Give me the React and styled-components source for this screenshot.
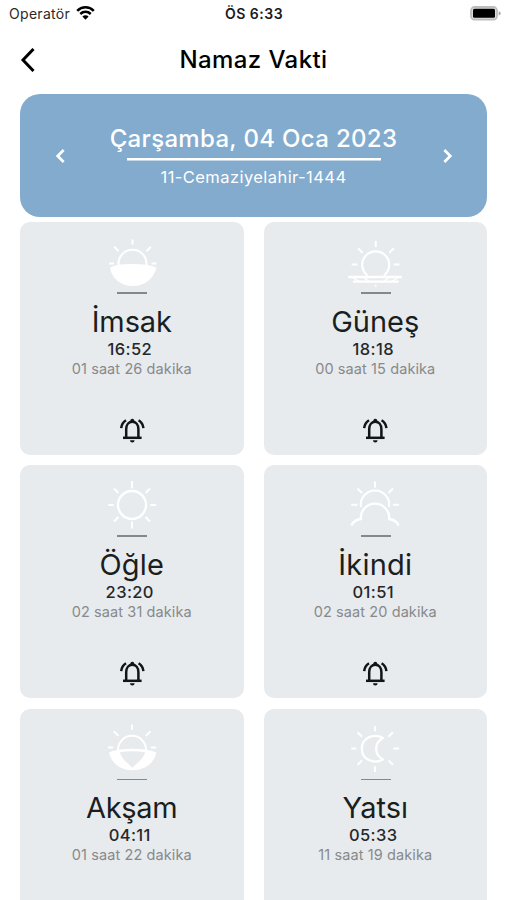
import React from "react";
import styled, { createGlobalStyle } from "styled-components";

const GlobalStyle = createGlobalStyle`
  * { box-sizing: border-box; }
  html, body { margin: 0; padding: 0; background: #fff; }
  body { font-family: Inter, "Liberation Sans", sans-serif; color: #1b1e20; overflow: hidden; }
`;

const Screen = styled.main`
  width: 507px;
  height: 900px;
  overflow: hidden;
  display: flex;
  flex-direction: column;
  background: #fff;
`;

const StatusBar = styled.header`
  height: 28px;
  flex: none;
  display: grid;
  grid-template-columns: 1fr auto 1fr;
  align-items: center;
  padding: 0 6px 1px 9px;
`;

const Carrier = styled.div`
  display: flex;
  align-items: center;
  gap: 6px;
  font-size: 14px;
  line-height: 20px;
  letter-spacing: 0.3px;
  color: #2a2a2a;
  svg { display: block; margin-top: -2px; }
`;

const Clock = styled.div`
  font-size: 14px;
  line-height: 20px;
  font-weight: 600;
  letter-spacing: 0.5px;
  margin-right: 2px;
  color: #1a1a1a;
`;

const Battery = styled.div`
  justify-self: end;
  svg { display: block; }
`;

const NavBar = styled.nav`
  height: 66px;
  flex: none;
  display: grid;
  grid-template-columns: 60px 1fr 60px;
  align-items: center;
`;

const IconButton = styled.button`
  border: 0;
  padding: 0;
  background: none;
  display: flex;
  justify-content: center;
  color: inherit;
  svg { display: block; }
`;

const BackButton = styled(IconButton)`
  justify-content: flex-start;
  padding: 0 0 2px 20px;
  color: #000;
`;

const Title = styled.h1`
  margin: 0;
  text-align: center;
  font-size: 24px;
  line-height: 32px;
  font-weight: 500;
  letter-spacing: 0.4px;
  color: #000;
  padding-bottom: 2px;
`;

const DateBanner = styled.section`
  height: 123px;
  flex: none;
  margin: 0 20px;
  border-radius: 20px;
  background: #82abce;
  color: #fff;
  display: grid;
  grid-template-columns: 80px 1fr 80px;
  align-items: center;
`;

const NextButton = styled(IconButton)`
  padding-left: 2px;
`;

const DateText = styled.div`
  display: flex;
  flex-direction: column;
  align-items: center;
  white-space: nowrap;
`;

const Gregorian = styled.div`
  font-size: 24px;
  line-height: 30px;
  font-weight: 500;
  letter-spacing: 0.33px;
  padding-top: 1px;
`;

const DateRule = styled.div`
  width: 254px;
  height: 3px;
  margin: 4px 0 5px;
  background: linear-gradient(#fff 0 2px, rgba(255, 255, 255, 0.55) 2px);
`;

const Hijri = styled.div`
  font-size: 16.5px;
  line-height: 22px;
  letter-spacing: 0.43px;
`;

const Grid = styled.section`
  display: grid;
  grid-template-columns: 1fr 1fr;
  grid-auto-rows: 233px;
  gap: 10.2px 20px;
  padding: 5.3px 20px 0;
`;

const Card = styled.article`
  border-radius: 10px;
  background: #e7ebee;
  padding-top: 13px;
  display: flex;
  flex-direction: column;
  align-items: center;
`;

const Picture = styled.svg`
  width: 60px;
  height: 57px;
  flex: none;
  display: block;
  fill: none;
  stroke: #fff;
  stroke-width: 2;
  stroke-linecap: butt;
`;

const CardRule = styled.div`
  width: 30px;
  height: 1.4px;
  margin-left: 1px;
  background: #85888a;
`;

const Name = styled.h2`
  margin: 13px 0 0;
  font-size: 29px;
  line-height: 30px;
  font-weight: 400;
  letter-spacing: ${(p) => p.$tracking || 0}px;
`;

const Time = styled.div`
  margin: 2.3px 4px 0 0;
  font-size: 16.5px;
  line-height: 20px;
  font-weight: 550;
  letter-spacing: 0.4px;
  color: #25282a;
`;

const Remaining = styled.div`
  margin-top: 0.7px;
  font-size: 14.5px;
  line-height: 18px;
  letter-spacing: 0.1px;
  color: #87898b;
`;

const BellButton = styled(IconButton)`
  margin-top: 37px;
  color: #121416;
`;

const pictures = {
  dawn: (
    <>
      <path d="M30.5 4.5v5M12.2 11.8l4.4 4.4M48.8 11.8l-4.4 4.4M7 28.4h5M49.5 28.4h5" />
      <path d="M16.7 31a14 14 0 1 1 27.6 0" />
      <path stroke="none" fill="#fff" d="M8 32.5q6-3.4 22.5-3.4t24 3.4C52 43.500 42.500 51 30.800 51S9.500 43.500 8 32.500z" />
    </>
  ),
  sunrise: (
    <>
      <path d="M30.7 6v6.300M13 13.300l4.500 4.500M48.800 13.300l-4.500 4.500M6.700 29.500h5.600M48.800 29.500h5.600" />
      <path d="M22.500 40.500a13.500 13.500 0 1 1 16.400 0" strokeWidth="2.200" />
      <path d="M3.300 42h53.500M8 46.600h45.500" strokeWidth="2.300" />
      <path d="M8 43l6 3M19 43l5 3M44 43l-5 3M53 43l-6 3" strokeWidth="1.200" />
      <path d="M30.700 49.700v2.300" strokeWidth="1.500" />
    </>
  ),
  noon: (
    <>
      <path d="M30 3v7.200M12 10.500l4.500 4.500M48 10.500l-4.500 4.500M6.300 27h5.400M48.300 27h5.700M12 43.500l4.500-4.500M48 43.500l-4.500-4.500M30 43.800v6.800" />
      <circle cx="30" cy="27" r="14" strokeWidth="2.300" />
    </>
  ),
  afternoon: (
    <>
      <path d="M30 3.500v6M12.500 10.500l4.500 4.500M48 10.500l-4.500 4.500M6.300 26.800h6M48 26.800h5.800" />
      <path d="M16 29a14.200 14.200 0 1 1 28 0" />
      <path d="M6.300 47.500q2.500-5.500 9.600-6.500a14.150 14.150 0 1 1 28.200 0q7.100 1 9.600 6.500" strokeWidth="2.300" />
    </>
  ),
  sunset: (
    <>
      <path d="M30 2.500v5.200M11.800 9.200l4.700 4.700M48.500 9.200l-4.700 4.700M6 25.500h5.200M49 25.500h5" />
      <path d="M16.100 29.500a14 14 0 1 1 27.800 0" />
      <path stroke="none" fill="#fff" fillRule="evenodd" d="M7 30.500q6-3.800 23-3.800t24.500 3.800C52 41.500 42.500 48.200 30.500 48.200S9.500 41.500 7 30.500zM18 30.200q12.500-2 25 0c-1.500 6.500-7.500 10.500-12.700 15.500C25.500 40.500 19 36.500 18 30.200z" />
    </>
  ),
  night: (
    <>
      <path d="M30 4v5.300M12.500 10.300l4.500 4.500M48 10.300l-4.500 4.500M6.300 26.600h5M48.300 26.600h5.700M12.500 42.900l4.500-4.500M48 42.900l-4.500-4.500M30 44.300v5.700" />
      <path d="M38 16C28.500 10.700 16.800 16 16.800 26.700S28.500 42.700 38 37.500C29.800 33.500 28 21.500 38 16z" strokeWidth="2.200" strokeLinejoin="round" />
    </>
  ),
};

const prayers = [
  { name: "İmsak", time: "16:52", left: "01 saat 26 dakika", picture: "dawn", tracking: -0.1 },
  { name: "Güneş", time: "18:18", left: "00 saat 15 dakika", picture: "sunrise" },
  { name: "Öğle", time: "23:20", left: "02 saat 31 dakika", picture: "noon", tracking: 0.15 },
  { name: "İkindi", time: "01:51", left: "02 saat 20 dakika", picture: "afternoon", tracking: 0.2 },
  { name: "Akşam", time: "04:11", left: "01 saat 22 dakika", picture: "sunset", tracking: -0.3 },
  { name: "Yatsı", time: "05:33", left: "11 saat 19 dakika", picture: "night" },
];

function Chevron({ width, height, weight, right }) {
  return (
    <svg width={width} height={height} viewBox={`0 0 ${width} ${height}`} fill="none" stroke="currentColor" strokeWidth={weight}>
      <path
        d={
          right
            ? `M${weight / 2} 1L${width - weight} ${height / 2}L${weight / 2} ${height - 1}`
            : `M${width - weight / 2} 1L${weight} ${height / 2}L${width - weight / 2} ${height - 1}`
        }
      />
    </svg>
  );
}

function Bell() {
  return (
    <svg width="30" height="30" viewBox="0 0 30 30" fill="none" stroke="currentColor" strokeWidth="2.500">
      <path d="M9.200 22.800V14.200C9.200 9.500 11.800 6.700 15.300 6.700S21.400 9.500 21.400 14.200V22.800" />
      <path d="M6 22.800h18.600" />
      <path d="M4.200 13.200C4.500 9.800 6.300 7 9 5.300M26.400 13.200C26.100 9.800 24.300 7 21.600 5.300" />
      <path d="M13.200 6.500a2.100 2.800 0 0 1 4.200 0zM13 25.300h4.600a2.300 2.200 0 0 1-4.600 0z" fill="currentColor" stroke="none" />
    </svg>
  );
}

export default function App() {
  return (
    <>
      <GlobalStyle />
      <Screen>
        <StatusBar>
          <Carrier>
            Operatör
            <svg width="19" height="14" viewBox="0 0 19 14" fill="none" stroke="#000" strokeWidth="2.500">
              <path d="M1.200 4.800a11.700 11.700 0 0 1 16.600 0M4.300 8a7.400 7.400 0 0 1 10.400 0" />
              <path d="M9.500 13.700L6.400 10.600a4.400 4.400 0 0 1 6.200 0z" fill="#000" stroke="none" />
            </svg>
          </Carrier>
          <Clock>ÖS 6:33</Clock>
          <Battery>
            <svg width="31" height="15" viewBox="0 0 31 15">
              <rect x="1" y="1" width="26" height="12.600" rx="3.600" fill="#ddd" stroke="#bdbdbd" strokeWidth="1.800" />
              <rect x="3" y="2.800" width="22" height="9" rx="1.500" fill="#000" />
              <path d="M28.700 5.200q2 .6 2 2.200t-2 2.200z" fill="#a5a5a5" />
            </svg>
          </Battery>
        </StatusBar>
        <NavBar>
          <BackButton aria-label="Geri">
            <Chevron width={15} height={24} weight={3} />
          </BackButton>
          <Title>Namaz Vakti</Title>
        </NavBar>
        <DateBanner>
          <IconButton aria-label="Önceki gün">
            <Chevron width={10} height={14} weight={2.7} />
          </IconButton>
          <DateText>
            <Gregorian>Çarşamba, 04 Oca 2023</Gregorian>
            <DateRule />
            <Hijri>11-Cemaziyelahir-1444</Hijri>
          </DateText>
          <NextButton aria-label="Sonraki gün">
            <Chevron width={10} height={14} weight={2.7} right />
          </NextButton>
        </DateBanner>
        <Grid>
          {prayers.map((p) => (
            <Card key={p.name}>
              <Picture viewBox="0 0 60 57">{pictures[p.picture]}</Picture>
              <CardRule />
              <Name $tracking={p.tracking}>{p.name}</Name>
              <Time>{p.time}</Time>
              <Remaining>{p.left}</Remaining>
              <BellButton aria-label="Bildirim">
                <Bell />
              </BellButton>
            </Card>
          ))}
        </Grid>
      </Screen>
    </>
  );
}
